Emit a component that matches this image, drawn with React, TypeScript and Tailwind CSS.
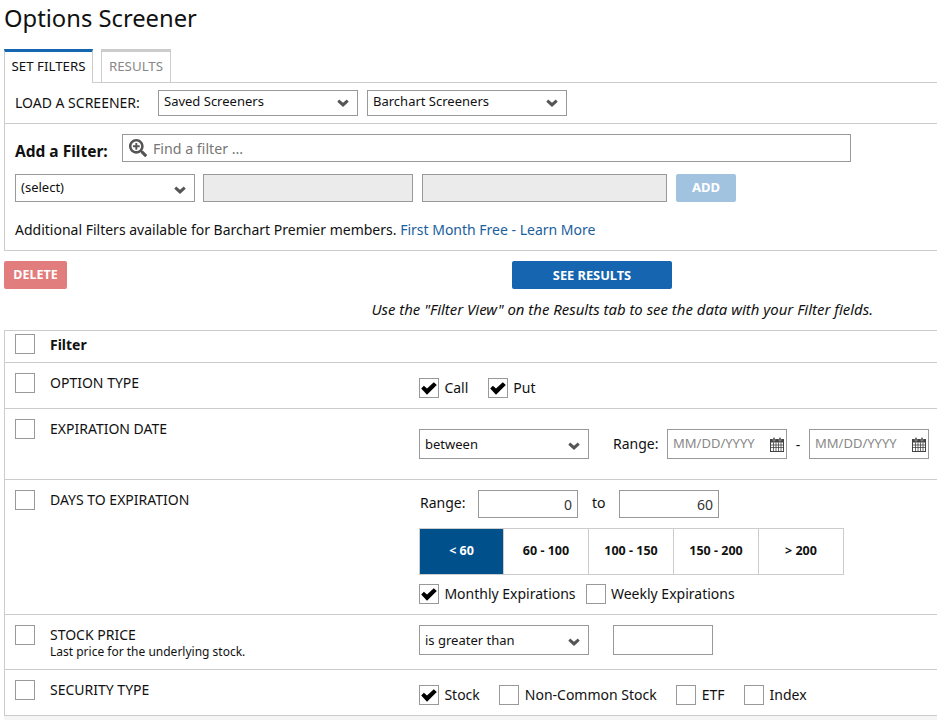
import React from "react";
import { FaSearchPlus } from "react-icons/fa";

const CalendarIcon = () => (
  <svg width="14" height="15" viewBox="0 0 14 15" className="shrink-0">
    <rect x="0.5" y="2.5" width="13" height="12" fill="none" stroke="#444" />
    <rect x="0.5" y="2" width="13" height="3.5" fill="#444" />
    <rect x="3" y="0.5" width="2" height="3.5" rx="0.8" fill="#444" stroke="#fff" strokeWidth="0.4" />
    <rect x="9" y="0.5" width="2" height="3.5" rx="0.8" fill="#444" stroke="#fff" strokeWidth="0.4" />
    <path d="M1 8h12M1 10.5h12M3.5 5.5v9M6 5.5v9M8.5 5.5v9M11 5.5v9" stroke="#444" strokeWidth="0.8" fill="none" />
  </svg>
);

const CheckMark = () => (
  <svg width="16" height="13" viewBox="0 0 16 13" className="shrink-0">
    <path d="M0.2 6.4 2.9 3.7 6 6.6 12.8 0.2 15.8 2.9 6 12.8z" fill="#000" />
  </svg>
);

const Chevron = () => (
  <svg width="12" height="8" viewBox="0 0 12 8" className="mt-[3px] shrink-0">
    <path d="M0.3 2.7 2.2 0.4 6 3.8 9.8 0.4 11.7 2.7 6 8z" fill="#555" />
  </svg>
);

const Check = ({ checked, className = "" }: { checked?: boolean; className?: string }) => (
  <span
    className={`flex h-5 w-5 shrink-0 items-center justify-center border border-[#999] bg-white ${className}`}
  >
    {checked && <CheckMark />}
  </span>
);

const CheckLabel = ({ label, checked, className = "" }: { label: string; checked?: boolean; className?: string }) => (
  <label className={`flex items-start gap-[5.4px] text-[14px] leading-[20px] text-[#111] ${className}`}>
    <Check checked={checked} />
    <span>{label}</span>
  </label>
);

const Select = ({ label, className = "" }: { label: string; className?: string }) => (
  <div
    className={`flex shrink-0 items-center justify-between border border-[#999] bg-white pl-[5px] pr-[8px] text-[13px] text-[#111] ${className}`}
  >
    <span>{label}</span>
    <Chevron />
  </div>
);

const Box = ({ value, className = "" }: { value?: string; className?: string }) => (
  <div
    className={`flex shrink-0 items-center justify-end border border-[#999] bg-white pr-[5px] pt-[1px] text-[14px] text-[#333] ${className}`}
  >
    {value}
  </div>
);

const DateBox = ({ className = "" }: { className?: string }) => (
  <div
    className={`flex h-[30px] w-[120px] shrink-0 items-center justify-between border border-[#999] bg-white pl-[5px] pr-[2px] text-[13px] text-[#888] ${className}`}
  >
    <span>MM/DD/YYYY</span>
    <CalendarIcon />
  </div>
);

const Row = ({
  height,
  title,
  note,
  children,
}: {
  height: string;
  title: string;
  note?: string;
  children: React.ReactNode;
}) => (
  <div className={`flex border-b border-[#ccc] ${height}`}>
    <div className="flex w-[414px] shrink-0 gap-[15px] pl-[10px] pt-[10px]">
      <Check />
      <div className="pt-[1px] text-[14px] leading-[18px] text-[#111]">
        <div>{title}</div>
        {note && <div className="text-[12px] leading-[16px]">{note}</div>}
      </div>
    </div>
    <div className="min-w-0 flex-1">{children}</div>
  </div>
);

const RANGES = ["< 60", "60 - 100", "100 - 150", "150 - 200", "> 200"];

export default function App() {
  return (
    <div className="h-[720px] w-[937px] overflow-hidden bg-white font-['Noto_Sans',sans-serif] text-[14px] text-[#111]">
      <h1 className="h-[49px] pl-1 text-[23.75px] leading-[36px] text-[#111]">Options Screener</h1>

      <div className="relative z-10 -mb-px ml-1 flex h-[34px] gap-2 text-[13.3px]">
        <div className="flex w-[89px] items-center justify-center border-x border-t-[3px] border-x-[#ccc] border-t-[#1565b0] bg-white pb-[1px]">
          SET FILTERS
        </div>
        <div className="flex h-[33px] w-[70px] items-center justify-center border-x border-t-[3px] border-x-[#ccc] border-t-[#ccc] bg-white pb-[1px] text-[#888]">
          RESULTS
        </div>
      </div>

      <div className="ml-1 border-y border-l border-[#ccc]">
        <div className="flex h-[41px] items-center border-b border-[#ccc] pb-[1px] pl-[10px]">
          <span className="w-[143px] text-[14px]">LOAD A SCREENER:</span>
          <Select label="Saved Screeners" className="h-[26px] w-[200px] pb-[2px] text-[12.8px]" />
          <Select label="Barchart Screeners" className="ml-[9px] h-[26px] w-[200px] pb-[2px] text-[12.8px]" />
        </div>

        <div className="h-[126px] pl-[10px]">
          <div className="flex pt-[10px]">
            <span className="w-[107px] pt-[5px] text-[15.5px] font-bold leading-[24px]">Add a Filter:</span>
            <div className="flex h-[28px] w-[729px] items-center gap-[6px] border border-[#999] pl-[6px] text-[14.2px] text-[#777]">
              <FaSearchPlus size={18} className="text-[#555]" />
              <span className="pt-[2px]">Find a filter ...</span>
            </div>
          </div>
          <div className="mt-[11px] flex items-center">
            <Select label="(select)" className="h-[28px] w-[180px]" />
            <div className="ml-2 h-[28px] w-[210px] border border-[#999] bg-[#ebebeb]" />
            <div className="ml-[9px] h-[28px] w-[245px] border border-[#999] bg-[#ebebeb]" />
            <button className="ml-[9px] h-[28px] w-[60px] rounded-[2px] bg-[#a1c3e0] text-[13px] font-bold text-white">
              ADD
            </button>
          </div>
          <p className="mt-[18px] text-[14px] leading-[20px]">
            Additional Filters available for Barchart Premier members.{" "}
            <span className="text-[#1a5e9c]">First Month Free - Learn More</span>
          </p>
        </div>
      </div>

      <div className="relative ml-1 mt-[10px] flex h-[28px] justify-between">
        <button className="h-[28px] w-[63px] rounded-[2px] bg-[#e27d7d] text-[12.5px] font-bold text-white">DELETE</button>
        <button className="mr-[265px] h-[28px] w-[160px] rounded-[2px] bg-[#1565b0] pt-[1px] text-[12.8px] font-bold text-white">
          SEE RESULTS
        </button>
      </div>
      <p className="mr-[64px] mt-[10px] text-right text-[14.93px] italic leading-[20px]">
        Use the "Filter View" on the Results tab to see the data with your Filter fields.
      </p>

      <div className="ml-1 mt-[11px] border-l border-t border-[#ccc]">
        <div className="flex h-[32px] gap-[15px] border-b border-[#ccc] pl-[10px] pt-[3px]">
          <Check />
          <span className="text-[14px] font-bold leading-[22px]">Filter</span>
        </div>

        <Row height="h-[46px]" title="OPTION TYPE">
          <div className="flex gap-[19.6px] pt-[15px]">
            <CheckLabel label="Call" checked />
            <CheckLabel label="Put" checked />
          </div>
        </Row>

        <Row height="h-[71px]" title="EXPIRATION DATE">
          <div className="flex items-center pt-[20px]">
            <Select label="between" className="h-[30px] w-[170px] pt-[1px]" />
            <span className="ml-[24px] w-[54px] pb-[2px]">Range:</span>
            <DateBox />
            <span className="w-[22px] text-center">-</span>
            <DateBox />
          </div>
        </Row>

        <Row height="h-[135px]" title="DAYS TO EXPIRATION">
          <div className="pt-[10px]">
            <div className="flex h-[28px] items-center">
              <span className="ml-[1px] w-[58px] pb-[3px]">Range:</span>
              <Box value="0" className="h-[28px] w-[100px]" />
              <span className="ml-[14px] w-[27px] pb-[3px]">to</span>
              <Box value="60" className="h-[28px] w-[100px]" />
            </div>
            <div className="mt-[10px] flex h-[47px] w-[425px] border border-[#ccc]">
              {RANGES.map((range, i) => (
                <div
                  key={range}
                  className={`flex items-center justify-center text-[12.5px] font-bold ${
                    i === 0 ? "w-[83px] bg-[#00508c] text-white" : "flex-1 border-l border-[#ccc] text-[#111]"
                  }`}
                >
                  {range}
                </div>
              ))}
            </div>
            <div className="mt-[9px] flex gap-[10px]">
              <CheckLabel label="Monthly Expirations" checked />
              <CheckLabel label="Weekly Expirations" />
            </div>
          </div>
        </Row>

        <Row height="h-[55px]" title="STOCK PRICE" note="Last price for the underlying stock.">
          <div className="flex items-center pt-[10px]">
            <Select label="is greater than" className="h-[30px] w-[170px] pt-[1px]" />
            <Box className="ml-[24px] h-[30px] w-[100px]" />
          </div>
        </Row>

        <Row height="h-[46px]" title="SECURITY TYPE">
          <div className="flex gap-[19.6px] pt-[15px]">
            <CheckLabel label="Stock" checked />
            <CheckLabel label="Non-Common Stock" />
            <CheckLabel label="ETF" />
            <CheckLabel label="Index" />
          </div>
        </Row>
      </div>
      <div className="ml-1 h-[10px] bg-[#f5f5f5]" />
    </div>
  );
}
